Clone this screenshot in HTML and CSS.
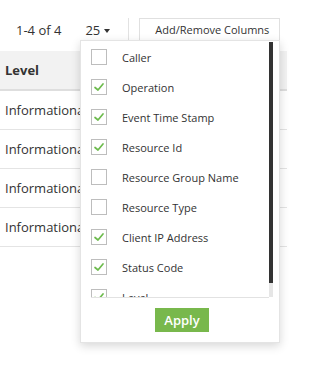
FILE: index.html
```html
<!DOCTYPE html>
<html>
<head>
<meta charset="utf-8">
<link rel="stylesheet" href="styles.css">
</head>
<body>
<div class="page">
  <div class="toolbar">
    <span class="count">1-4 of 4</span>
    <span class="pagesize">25<span class="caret"></span></span>
    <span class="sep"></span>
    <button class="cols-btn">Add/Remove Columns</button>
  </div>
  <div class="table">
    <div class="row head">Level</div>
    <div class="row">Informational</div>
    <div class="row">Informational</div>
    <div class="row">Informational</div>
    <div class="row">Informational</div>
  </div>

  <div class="menu">
    <div class="listwrap">
      <div class="list">
        <label class="item"><span class="box"></span>Caller</label>
        <label class="item"><span class="box on"><svg viewBox="0 0 14 14"><polyline points="3,7.5 6,10 11,4"/></svg></span>Operation</label>
        <label class="item"><span class="box on"><svg viewBox="0 0 14 14"><polyline points="3,7.5 6,10 11,4"/></svg></span>Event Time Stamp</label>
        <label class="item"><span class="box on"><svg viewBox="0 0 14 14"><polyline points="3,7.5 6,10 11,4"/></svg></span>Resource Id</label>
        <label class="item"><span class="box"></span>Resource Group Name</label>
        <label class="item"><span class="box"></span>Resource Type</label>
        <label class="item"><span class="box on"><svg viewBox="0 0 14 14"><polyline points="3,7.5 6,10 11,4"/></svg></span>Client IP Address</label>
        <label class="item"><span class="box on"><svg viewBox="0 0 14 14"><polyline points="3,7.5 6,10 11,4"/></svg></span>Status Code</label>
        <label class="item"><span class="box on"><svg viewBox="0 0 14 14"><polyline points="3,7.5 6,10 11,4"/></svg></span>Level</label>
      </div>
      <div class="scrollbar"><div class="thumb"></div></div>
    </div>
    <div class="actions"><button class="apply">Apply</button></div>
  </div>
</div>
</body>
</html>
```

FILE: styles.css
```css
* { box-sizing: border-box; }
html, body { margin: 0; padding: 0; background: #fff; }
body {
  font-family: "Open Sans", "DejaVu Sans", sans-serif;
  color: #333;
  width: 312px;
  height: 377px;
  overflow: hidden;
}
.page { position: relative; }

.toolbar {
  display: flex;
  align-items: center;
  height: 42px;
  padding: 18px 0 0 16px;
  font-size: 13px;
}
.count { margin-right: 24px; }
.pagesize { display: flex; align-items: center; }
.caret {
  display: inline-block;
  width: 0; height: 0;
  margin-left: 4px;
  margin-top: 2px;
  border-left: 3.5px solid transparent;
  border-right: 3.5px solid transparent;
  border-top: 4px solid #333;
}
.sep {
  width: 1px;
  height: 22px;
  background: #e2e2e2;
  margin: 0 10px 0 18px;
  align-self: flex-start;
}
.cols-btn {
  height: 24px;
  width: 141px;
  align-self: flex-start;
  border: 1px solid #e0e0e0;
  background: #fff;
  font-family: inherit;
  font-size: 11px;
  color: #333;
  padding: 0 0 0 15px;
  text-align: left;
  line-height: 22px;
}

.table {
  margin-top: 9px;
  width: 287px;
  font-size: 13px;
}
.row {
  height: 39px;
  line-height: 38px;
  padding-left: 5px;
  border-bottom: 1px solid #e4e4e4;
  white-space: nowrap;
}
.row.head {
  height: 40px;
  background: #f2f2f2;
  border-bottom: 2px solid #dedede;
  font-weight: 700;
}

.menu {
  position: absolute;
  left: 80px;
  top: 40px;
  width: 200px;
  height: 303px;
  background: #fff;
  border: 1px solid #e4e4e4;
  box-shadow: 0 3px 9px rgba(0, 0, 0, 0.16);
  padding: 1px 6px 0 10px;
}
.listwrap {
  display: flex;
  height: 256px;
}
.list {
  flex: 1;
  overflow: hidden;
  border-bottom: 1px solid #e2e2e2;
}
.scrollbar {
  width: 4px;
  height: 255px;
  background: #e6e6e6;
  flex: none;
}
.thumb {
  height: 241px;
  background: #333;
}
.item {
  display: flex;
  align-items: center;
  height: 30px;
  font-size: 11px;
  color: #333;
  white-space: nowrap;
}
.box {
  width: 16px;
  height: 16px;
  border: 1px solid #bdbdbd;
  margin-right: 15px;
  flex: none;
  display: flex;
  align-items: center;
  justify-content: center;
}
.box svg { width: 14px; height: 14px; }
.box polyline {
  fill: none;
  stroke: #6dbb4d;
  stroke-width: 1.7;
  stroke-linecap: round;
  stroke-linejoin: round;
}
.actions {
  display: flex;
  justify-content: center;
  padding-top: 10px;
}
.apply {
  width: 54px;
  height: 24px;
  border: none;
  background: #78b84c;
  color: #fff;
  font-family: inherit;
  font-size: 13px;
  font-weight: 600;
  padding: 0;
}
```
